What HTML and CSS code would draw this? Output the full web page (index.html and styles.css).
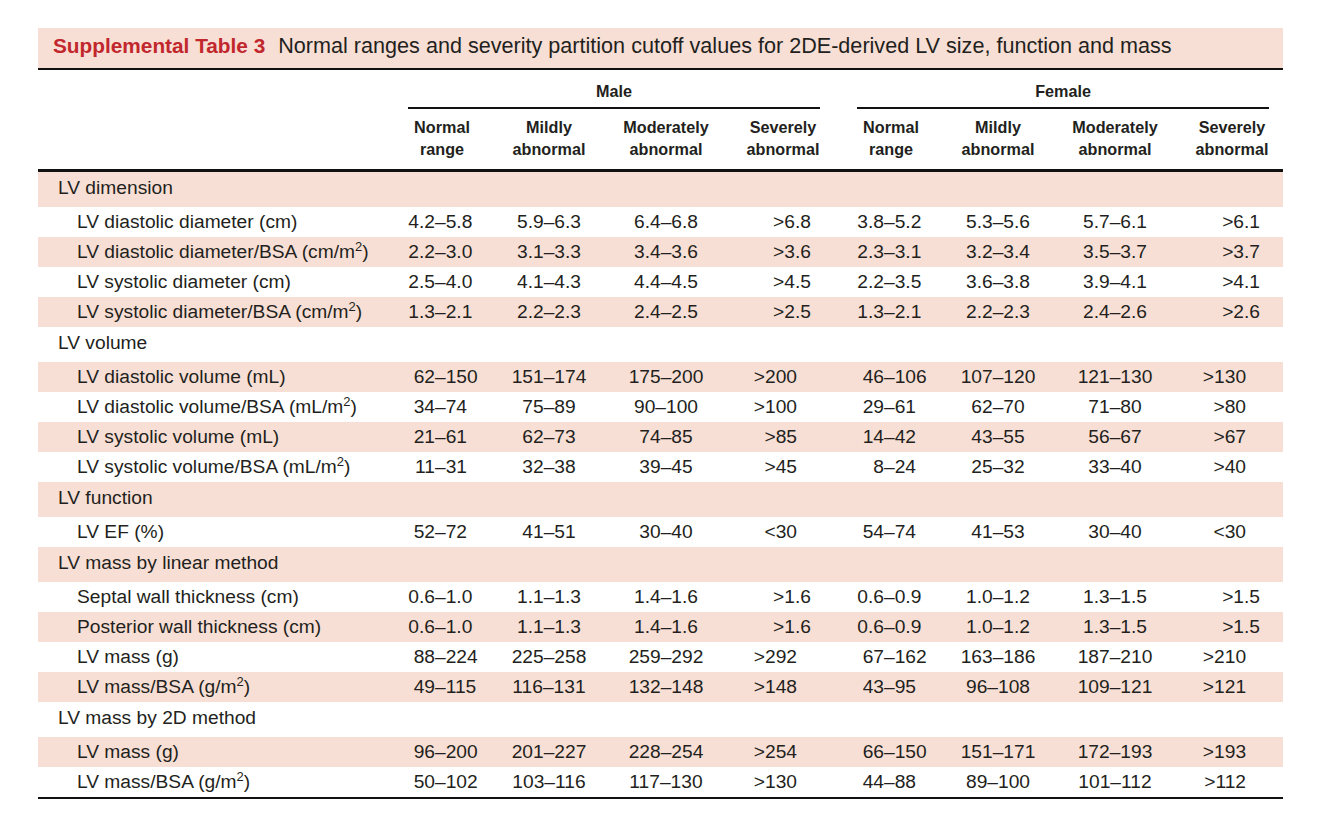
FILE: index.html
```html
<!DOCTYPE html>
<html>
<head>
<meta charset="utf-8">
<title>Supplemental Table 3</title>
<link rel="stylesheet" href="styles.css">
</head>
<body>
<div class="page">
  <div class="caption"><span class="tag">Supplemental Table 3</span><span class="desc">Normal ranges and severity partition cutoff values for 2DE-derived LV size, function and mass</span></div>
  <table class="tbl">
    <colgroup>
      <col class="c-label"><col class="c-n"><col class="c-mi"><col class="c-mo"><col class="c-se"><col class="c-gap"><col class="c-n"><col class="c-mi"><col class="c-mo"><col class="c-se"><col class="c-end">
    </colgroup>
    <thead>
      <tr class="h1">
        <th rowspan="2" class="blank"></th>
        <th colspan="4" class="group">Male</th>
        <th rowspan="2" class="blank"></th>
        <th colspan="4" class="group">Female</th>
        <th rowspan="2" class="blank"></th>
      </tr>
      <tr class="h2">
        <th class="hn">Normal<br>range</th><th>Mildly<br>abnormal</th><th>Moderately<br>abnormal</th><th class="hs">Severely<br>abnormal</th>
        <th class="hn">Normal<br>range</th><th>Mildly<br>abnormal</th><th>Moderately<br>abnormal</th><th class="hs">Severely<br>abnormal</th>
      </tr>
    </thead>
    <tbody>
      <tr class="sec"><td colspan="11">LV dimension</td></tr>
      <tr class="dec"><td class="lab">LV diastolic diameter (cm)</td><td class="n"><span class="l">4.2</span>–5.8</td><td>5.9–6.3</td><td>6.4–6.8</td><td class="s">&gt;6.8</td><td></td><td class="n"><span class="l">3.8</span>–5.2</td><td>5.3–5.6</td><td>5.7–6.1</td><td class="s">&gt;6.1</td><td></td></tr>
      <tr class="dec"><td class="lab">LV diastolic diameter/BSA (cm/m<sup>2</sup>)</td><td class="n"><span class="l">2.2</span>–3.0</td><td>3.1–3.3</td><td>3.4–3.6</td><td class="s">&gt;3.6</td><td></td><td class="n"><span class="l">2.3</span>–3.1</td><td>3.2–3.4</td><td>3.5–3.7</td><td class="s">&gt;3.7</td><td></td></tr>
      <tr class="dec"><td class="lab">LV systolic diameter (cm)</td><td class="n"><span class="l">2.5</span>–4.0</td><td>4.1–4.3</td><td>4.4–4.5</td><td class="s">&gt;4.5</td><td></td><td class="n"><span class="l">2.2</span>–3.5</td><td>3.6–3.8</td><td>3.9–4.1</td><td class="s">&gt;4.1</td><td></td></tr>
      <tr class="dec"><td class="lab">LV systolic diameter/BSA (cm/m<sup>2</sup>)</td><td class="n"><span class="l">1.3</span>–2.1</td><td>2.2–2.3</td><td>2.4–2.5</td><td class="s">&gt;2.5</td><td></td><td class="n"><span class="l">1.3</span>–2.1</td><td>2.2–2.3</td><td>2.4–2.6</td><td class="s">&gt;2.6</td><td></td></tr>
      <tr class="sec"><td colspan="11">LV volume</td></tr>
      <tr><td class="lab">LV diastolic volume (mL)</td><td class="n"><span class="l">62</span>–150</td><td>151–174</td><td>175–200</td><td class="s">&gt;200</td><td></td><td class="n"><span class="l">46</span>–106</td><td>107–120</td><td>121–130</td><td class="s">&gt;130</td><td></td></tr>
      <tr><td class="lab">LV diastolic volume/BSA (mL/m<sup>2</sup>)</td><td class="n"><span class="l">34</span>–74</td><td>75–89</td><td>90–100</td><td class="s">&gt;100</td><td></td><td class="n"><span class="l">29</span>–61</td><td>62–70</td><td>71–80</td><td class="s">&gt;80</td><td></td></tr>
      <tr><td class="lab">LV systolic volume (mL)</td><td class="n"><span class="l">21</span>–61</td><td>62–73</td><td>74–85</td><td class="s">&gt;85</td><td></td><td class="n"><span class="l">14</span>–42</td><td>43–55</td><td>56–67</td><td class="s">&gt;67</td><td></td></tr>
      <tr><td class="lab">LV systolic volume/BSA (mL/m<sup>2</sup>)</td><td class="n"><span class="l">11</span>–31</td><td>32–38</td><td>39–45</td><td class="s">&gt;45</td><td></td><td class="n"><span class="l">8</span>–24</td><td>25–32</td><td>33–40</td><td class="s">&gt;40</td><td></td></tr>
      <tr class="sec"><td colspan="11">LV function</td></tr>
      <tr><td class="lab">LV EF (%)</td><td class="n"><span class="l">52</span>–72</td><td>41–51</td><td>30–40</td><td class="s">&lt;30</td><td></td><td class="n"><span class="l">54</span>–74</td><td>41–53</td><td>30–40</td><td class="s">&lt;30</td><td></td></tr>
      <tr class="sec"><td colspan="11">LV mass by linear method</td></tr>
      <tr class="dec"><td class="lab">Septal wall thickness (cm)</td><td class="n"><span class="l">0.6</span>–1.0</td><td>1.1–1.3</td><td>1.4–1.6</td><td class="s">&gt;1.6</td><td></td><td class="n"><span class="l">0.6</span>–0.9</td><td>1.0–1.2</td><td>1.3–1.5</td><td class="s">&gt;1.5</td><td></td></tr>
      <tr class="dec"><td class="lab">Posterior wall thickness (cm)</td><td class="n"><span class="l">0.6</span>–1.0</td><td>1.1–1.3</td><td>1.4–1.6</td><td class="s">&gt;1.6</td><td></td><td class="n"><span class="l">0.6</span>–0.9</td><td>1.0–1.2</td><td>1.3–1.5</td><td class="s">&gt;1.5</td><td></td></tr>
      <tr><td class="lab">LV mass (g)</td><td class="n"><span class="l">88</span>–224</td><td>225–258</td><td>259–292</td><td class="s">&gt;292</td><td></td><td class="n"><span class="l">67</span>–162</td><td>163–186</td><td>187–210</td><td class="s">&gt;210</td><td></td></tr>
      <tr><td class="lab">LV mass/BSA (g/m<sup>2</sup>)</td><td class="n"><span class="l">49</span>–115</td><td>116–131</td><td>132–148</td><td class="s">&gt;148</td><td></td><td class="n"><span class="l">43</span>–95</td><td>96–108</td><td>109–121</td><td class="s">&gt;121</td><td></td></tr>
      <tr class="sec"><td colspan="11">LV mass by 2D method</td></tr>
      <tr><td class="lab">LV mass (g)</td><td class="n"><span class="l">96</span>–200</td><td>201–227</td><td>228–254</td><td class="s">&gt;254</td><td></td><td class="n"><span class="l">66</span>–150</td><td>151–171</td><td>172–193</td><td class="s">&gt;193</td><td></td></tr>
      <tr><td class="lab">LV mass/BSA (g/m<sup>2</sup>)</td><td class="n"><span class="l">50</span>–102</td><td>103–116</td><td>117–130</td><td class="s">&gt;130</td><td></td><td class="n"><span class="l">44</span>–88</td><td>89–100</td><td>101–112</td><td class="s">&gt;112</td><td></td></tr>
    </tbody>
  </table>
</div>
</body>
</html>
```

FILE: styles.css
```css
html, body {
  margin: 0;
  padding: 0;
  background: #ffffff;
}
body {
  font-family: "Liberation Sans", Arial, Helvetica, sans-serif;
  color: #231f20;
}
.page {
  padding: 28px 0 0 38px;
  width: 1245px;
}
.caption {
  height: 36px;
  padding: 0 0 4px 15px;
  background: #f8dfd5;
  border-bottom: 2px solid #111;
  display: flex;
  align-items: center;
  font-size: 20.8px;
  white-space: nowrap;
}
.caption .tag {
  color: #c1272d;
  font-weight: bold;
  margin-right: 13px;
}
.caption .desc {
  font-size: 21.6px;
}
.tbl {
  width: 1245px;
  table-layout: fixed;
  border-collapse: collapse;
  font-size: 19.2px;
}
.tbl th, .tbl td {
  padding: 0;
  white-space: nowrap;
}
.c-label { width: 370px; }
.c-n { width: 82px; }
.c-mi { width: 118px; }
.c-mo { width: 116px; }
.c-se { width: 96px; }
.c-gap { width: 37px; }
.c-end { width: 14px; }

thead th {
  font-size: 16.2px;
  font-weight: bold;
  text-align: center;
}
.h1 .group {
  height: 19px;
  line-height: 19px;
  padding: 12px 0 6px;
  border-bottom: 2px solid #111;
}
.h2 th {
  line-height: 22px;
  padding: 7px 0 9px;
  border-bottom: 3px solid #111;
}
thead th.blank {
  border-bottom: 3px solid #111;
}
.h2 th.hn { padding-right: 14px; }
.h2 th.hs { padding-left: 22px; }

tbody tr:nth-child(odd) { background: #f8dfd5; }
tbody td {
  height: 30px;
  line-height: 30px;
  text-align: center;
}
tbody tr.sec td {
  text-align: left;
  padding: 1px 0 4px 20px;
}
tbody td.lab {
  text-align: left;
  padding-left: 39px;
}
tbody td.n { text-align: left; }
tbody td.n .l {
  display: inline-block;
  width: 27px;
  text-align: right;
}
tbody td.s {
  text-align: right;
  padding-right: 23px;
}
tbody tr.dec td.s { padding-right: 9px; }
tbody tr:last-child td { border-bottom: 2px solid #111; }
sup {
  font-size: 13px;
  line-height: 0;
  vertical-align: 7px;
}
```
